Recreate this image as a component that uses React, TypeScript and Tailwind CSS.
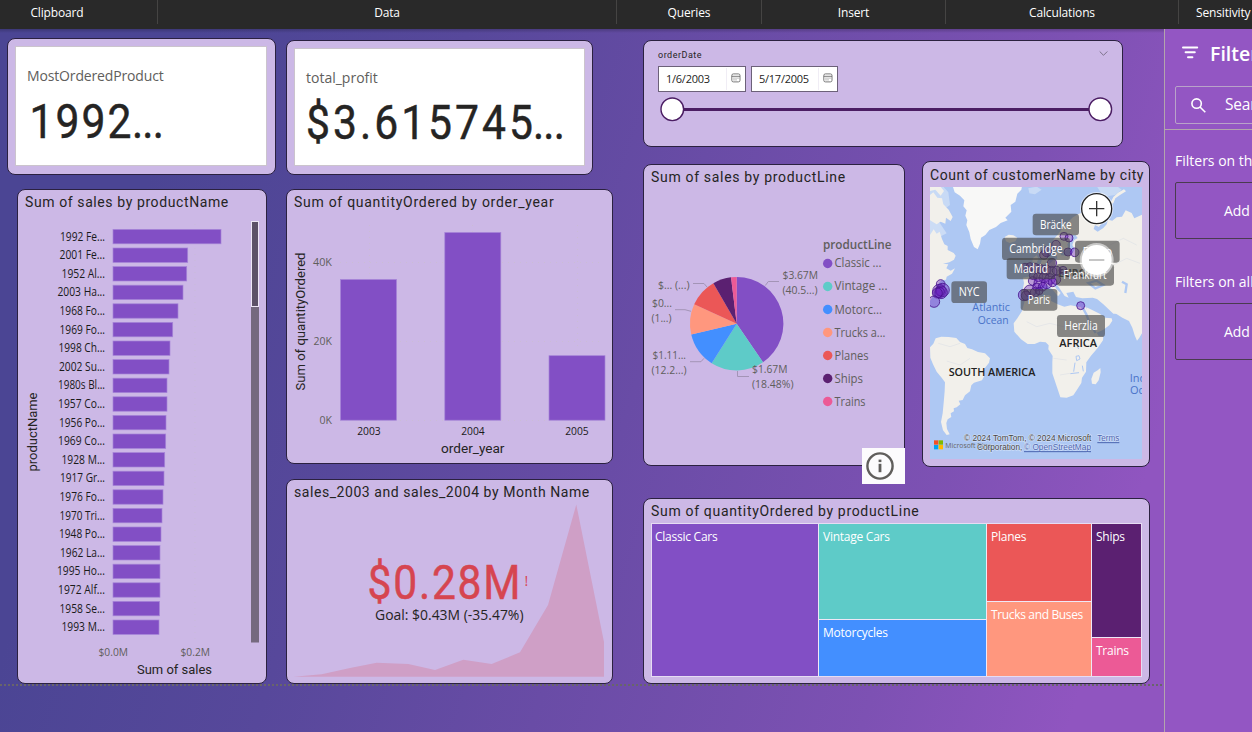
import React from "react";

const UI = "'Open Sans', 'Noto Sans', sans-serif";
const DIN = "Roboto, 'Noto Sans', sans-serif";

type LabelProps = {
  x: number;
  y: number;
  w?: number;
  size?: number;
  fill?: string;
  anchor?: "start" | "middle" | "end";
  font?: string;
  weight?: number;
  transform?: string;
  children: string;
};

function Label({ x, y, w, size = 11, fill = "#605e5c", anchor = "start", font = UI, weight = 400, transform, children }: LabelProps) {
  return (
    <text
      x={x}
      y={y}
      textLength={w}
      lengthAdjust="spacingAndGlyphs"
      fontSize={size}
      fill={fill}
      textAnchor={anchor}
      fontFamily={font}
      fontWeight={weight}
      transform={transform}
    >
      {children}
    </text>
  );
}

const NARROW = 0.87;

function BigNumber({ x, y, w, fill = "#252423", children }: { x: number; y: number; w: number; fill?: string; children: string }) {
  return (
    <text
      x={x / NARROW}
      y={y}
      textLength={w / NARROW}
      lengthAdjust="spacing"
      transform={`scale(${NARROW} 1)`}
      fontSize={49}
      fill={fill}
      stroke={fill}
      strokeWidth="0.5"
      fontFamily={DIN}
    >
      {children}
    </text>
  );
}

function Card({ className, children }: { className: string; children?: React.ReactNode }) {
  return (
    <section className={"shrink-0 overflow-hidden rounded-[8px] border border-[#2b2140] bg-[#ccb8e6] " + className}>{children}</section>
  );
}

function Title({ className, children }: { className: string; children: string }) {
  return (
    <h2 className={"whitespace-nowrap pl-[7px] font-[Roboto] text-[14px] leading-[20px] text-[#252423] " + className}>
      {children}
    </h2>
  );
}

function Ribbon() {
  const cell = "flex shrink-0 justify-center border-r border-[#454443]";
  return (
    <header className="h-[29px] shrink-0 bg-[#292929] text-[12px] leading-[25px] tracking-[-0.15px] text-white">
      <div className="flex h-[24px] w-[1400px]">
        <div className={cell + " w-[158px] pr-[43px]"}>Clipboard</div>
        <div className={cell + " w-[459px]"}>Data</div>
        <div className={cell + " w-[145px]"}>Queries</div>
        <div className={cell + " w-[184px]"}>Insert</div>
        <div className={cell + " w-[233px]"}>Calculations</div>
        <div className="pl-[17px]">Sensitivity</div>
      </div>
    </header>
  );
}

const products: [string, number, number][] = [
  ["1992 Fe...", 108, 45], ["2001 Fe...", 74.7, 45.5], ["1952 Al...", 73.7, 43.5], ["2003 Ha...", 70, 47.5],
  ["1968 Fo...", 65, 45.5], ["1969 Fo...", 59.7, 45.5], ["1998 Ch...", 57, 46.5], ["2002 Su...", 56, 46],
  ["1980s Bl...", 54, 47], ["1957 Co...", 54, 47], ["1956 Po...", 53, 46], ["1969 Co...", 52.7, 47],
  ["1928 M...", 51.7, 43.5], ["1917 Gr...", 51, 45], ["1976 Fo...", 50, 45.5], ["1970 Tri...", 49, 45.5],
  ["1948 Po...", 48, 46], ["1962 La...", 47, 45], ["1995 Ho...", 47, 48], ["1972 Alf...", 47, 47],
  ["1958 Se...", 46.5, 45.5], ["1993 M...", 46, 43.5],
];

function ProductSales() {
  return (
    <Card className="ml-[10px] mt-[14px] h-[495px] w-[250px]">
      <Title className="h-[25px] pt-[2px] tracking-[0.6px]">Sum of sales by productName</Title>
      <svg width="248" height="469" viewBox="18 215 248 469" className="block">
        <path d="M195 224V640" stroke="#c8bbd8" strokeDasharray="1 5" />
        {products.map(([name, value, w], i) => {
          const y = 229.4 + i * 18.6;
          return (
            <g key={name + i}>
              <Label x={105} y={y + 11.1} w={w} anchor="end" fill="#1a1a1a" size={11.8}>{name}</Label>
              <rect x={113} y={y} width={value} height={14.4} fill="#824fc5" stroke="#a584d8" strokeWidth="0.7" />
            </g>
          );
        })}
        <rect x="251" y="222" width="8" height="420.5" fill="#75697f" />
        <rect x="251.5" y="221.5" width="7" height="85" fill="#5d5168" stroke="#eee6f6" />
        <Label x={98.5} y={656} w={29.5}>$0.0M</Label>
        <Label x={180.5} y={656} w={29.5}>$0.2M</Label>
        <Label x={137} y={674} w={75} size={12.5} font={DIN} fill="#252423">Sum of sales</Label>
        <Label x={37} y={471.5} w={79} size={12.5} font={DIN} fill="#252423" transform="rotate(-90 37 471.5)">productName</Label>
      </svg>
    </Card>
  );
}

function YearQuantity() {
  return (
    <Card className="mt-[14px] h-[275px] w-[327px]">
      <Title className="h-[25px] pt-[2px] tracking-[0.72px]">Sum of quantityOrdered by order_year</Title>
      <svg width="325" height="248" viewBox="287 215 325 248" className="block">
        <path d="M340 262.5H604M340 341.5H604M340 420.5H604M369.5 225V420M472.5 225V420M577.5 225V420" stroke="#cbbcd6" strokeDasharray="1 5" />
        <g fill="#824fc5" stroke="#a584d8" strokeWidth="0.7">
          <rect x="340.5" y="279.5" width="56" height="140.7" />
          <rect x="444.8" y="232.5" width="56" height="187.7" />
          <rect x="549" y="355.7" width="56" height="64.5" />
        </g>
        <Label x={332} y={266.3} w={19} anchor="end">40K</Label>
        <Label x={332} y={345.3} w={18.5} anchor="end">20K</Label>
        <Label x={332} y={424.3} w={12.5} anchor="end">0K</Label>
        <Label x={369} y={435} w={23.5} anchor="middle" fill="#1a1a1a">2003</Label>
        <Label x={473} y={435} w={23.5} anchor="middle" fill="#1a1a1a">2004</Label>
        <Label x={577} y={435} w={23.5} anchor="middle" fill="#1a1a1a">2005</Label>
        <Label x={441} y={453} w={63.5} size={12.5} font={DIN} fill="#252423">order_year</Label>
        <Label x={305} y={390.5} w={138} size={12.5} font={DIN} fill="#252423" transform="rotate(-90 305 390.5)">Sum of quantityOrdered</Label>
      </svg>
    </Card>
  );
}

function Kpi() {
  return (
    <Card className="mt-[15px] h-[205px] w-[327px]">
      <Title className="h-[25px] pt-[2px] tracking-[0.56px]">sales_2003 and sales_2004 by Month Name</Title>
      <svg width="325" height="178" viewBox="287 505 325 178" className="block overflow-visible">
        <path
          d="M293.5 676.7 321.7 674.3 350 668 376.7 662.7 408.3 664 435 670 463.3 659.7 491.7 664 520 652.3 548 605 576.3 504.5 604 642V676.7Z"
          fill="#cf9fc6"
        />
        <BigNumber x={367.5} y={599} w={153} fill="#d64550">$0.28M</BigNumber>
        <Label x={524.5} y={585.5} size={14} fill="#d64550">!</Label>
        <Label x={375} y={620} w={148.5} size={14} fill="#252423">Goal: $0.43M (-35.47%)</Label>
      </svg>
    </Card>
  );
}

function CalendarIcon() {
  return (
    <svg width="10" height="10" viewBox="0 0 10 10" className="mr-[4px] mt-[-3px]" fill="none" stroke="#6b6b6b" strokeWidth="0.9">
      <rect x="0.8" y="0.9" width="8.2" height="8" rx="1.6" />
      <path d="M0.8 3.3H9" />
      <path d="M2.5 5.1H7.5M2.5 6.9H6" strokeDasharray="1 1" />
    </svg>
  );
}

function DateBox({ value, className }: { value: string; className: string }) {
  return (
    <div className={"flex h-[26px] items-center border border-[#6c6179] bg-white text-[11px] text-[#252423] " + className}>
      <span className="flex-1 pl-[7px] tracking-[-0.25px]">{value}</span>
      <span className="mr-[4px] h-[22px] border-l border-[#f0edf5]" />
      <CalendarIcon />
    </div>
  );
}

function DateSlicer() {
  return (
    <Card className="h-[107px] w-[480px]">
      <div className="flex h-[25px] justify-between pl-[14px] pr-[14px] pt-[8px]">
        <span className="font-[Roboto] text-[9px] leading-[12px] tracking-[0.5px] text-[#252423]">orderDate</span>
        <svg width="9" height="9" viewBox="0 0 9 9" fill="none" stroke="#7b7189"><path d="M0.7 2.5 4.5 6.3 8.3 2.5" /></svg>
      </div>
      <div className="flex gap-[5px] pl-[14px]">
        <DateBox value="1/6/2003" className="w-[88px]" />
        <DateBox value="5/17/2005" className="w-[87px]" />
      </div>
      <svg width="478" height="32" viewBox="644 92 478 32" className="block">
        <path d="M672 109.5H1100" stroke="#4b1d63" strokeWidth="3" />
        <circle cx="672.3" cy="109.3" r="11.3" fill="#fff" stroke="#4b1d63" strokeWidth="1.4" />
        <circle cx="1100.3" cy="109.3" r="11.3" fill="#fff" stroke="#4b1d63" strokeWidth="1.4" />
      </svg>
    </Card>
  );
}

const slices: [string, number, string, number][] = [
  ["Classic ...", 0.4047, "#824fc5", 47], ["Vintage ...", 0.59, "#5ecbc8", 53], ["Motorc...", 0.713, "#438fff", 47.5],
  ["Trucks a...", 0.818, "#ff977e", 51], ["Planes", 0.9167, "#eb5757", 34], ["Ships", 0.9806, "#5b2071", 28.5],
  ["Trains", 1, "#ec5a96", 31],
];

function PieCard() {
  const cx = 736.7, cy = 323.7, r = 46.7;
  const pt = (f: number) => `${cx + r * Math.sin(2 * Math.PI * f)} ${cy - r * Math.cos(2 * Math.PI * f)}`;
  return (
    <Card className="mt-[3px] h-[302px] w-[262px]">
      <Title className="h-[25px] pt-[2px] tracking-[0.68px]">Sum of sales by productLine</Title>
      <svg width="260" height="275" viewBox="644 190 260 275" className="block">
        {slices.map(([name, end, color, w], i) => {
          const start = i ? slices[i - 1][1] : 0;
          return (
            <g key={name}>
              <path d={`M${cx} ${cy}L${pt(start)}A${r} ${r} 0 0 1 ${pt(end)}Z`} fill={color} />
              <circle cx="827.7" cy={263.5 + i * 23} r="4.7" fill={color} />
              <Label x={834.5} y={267.3 + i * 23.1} w={w} size={12}>{name}</Label>
            </g>
          );
        })}
        <g fill="none" stroke="#a394b6">
          <path d="M765.3 285.5 768.3 281.5H779" /><path d="M693 283.5H704L707 287" /><path d="M675 309.7H685L691 311.3" />
          <path d="M690 361.7H701L704 358.3" /><path d="M737.5 371V376.5H749" />
        </g>
        <Label x={823} y={249} w={68.5} size={12} weight={600}>productLine</Label>
        <Label x={782.5} y={279.3} w={35.5}>$3.67M</Label>
        <Label x={782.5} y={294} w={35}>(40.5...)</Label>
        <Label x={658} y={288.5} w={31.5}>$... (...)</Label>
        <Label x={652} y={307.3} w={20}>$0...</Label>
        <Label x={651.5} y={322} w={20}>(1...)</Label>
        <Label x={652.5} y={359.3} w={33.5}>$1.11...</Label>
        <Label x={651.5} y={374} w={35}>(12.2...)</Label>
        <Label x={752} y={373} w={35.5}>$1.67M</Label>
        <Label x={752} y={388} w={41.5}>(18.48%)</Label>
      </svg>
    </Card>
  );
}

const bubbles: [number, number, number][] = [
  [462, 244, 12], [477, 249, 12], [438, 269, 13], [474, 291, 12], [494, 292, 13], [410, 290, 15], [426, 324, 14], [402, 300, 13],
  [459, 346, 12], [345, 338, 13], [360, 335, 12], [375, 338, 13], [390, 342, 14], [408, 345, 15], [425, 350, 16], [440, 347, 13],
  [370, 362, 12], [385, 366, 14], [402, 368, 15], [420, 372, 16], [438, 374, 14], [368, 378, 13], [388, 384, 16], [410, 385, 16],
  [428, 382, 13], [380, 396, 12], [398, 395, 13], [360, 408, 18], [375, 412, 14], [388, 408, 11], [342, 420, 17], [348, 422, 14],
  [512, 452, 12], [92, 387, 13], [88, 408, 20], [98, 405, 20], [93, 412, 19], [90, 410, 13], [82, 414, 15], [72, 440, 17],
];

function MapTag({ x, y, w, h, tx, tw, children }: { x: number; y: number; w: number; h: number; tx: number; tw: number; children: string }) {
  return (
    <g>
      <rect x={x} y={y} width={w} height={h} rx="10" fill="#444444" fillOpacity="0.62" />
      <Label x={tx} y={y + 45} w={tw} size={36} fill="#fff">{children}</Label>
    </g>
  );
}

function MapCard() {
  return (
    <Card className="h-[306px] w-[228px]">
      <Title className="h-[25px] pt-[3px] tracking-[0.6px]">Count of customerName by city</Title>
      <div className="pl-[7px]">
        <svg width="212" height="272" viewBox="60 96 636 816" className="block">
          <rect x="60" y="93" width="636" height="819" fill="#aec8f3" />
          <g fill="#dfe9f6">
            <path d="M60 93H98L115 112 120 150 102 163 82 140 60 128ZM355 100 380 95 395 104 375 118 358 115ZM560 93 620 93 635 104 615 120 580 125Z" opacity=".55" />
            <path d="M60 195 90 205 110 235 90 245 60 240Z" opacity=".6" />
          </g>
          <g fill="#f2f0eb">
            <path d="M60 120 70 112 82 128 96 130 100 148 116 164 128 186 122 198 108 188 106 206 92 200 80 208 60 196Z" />
            <path d="M60 93H90L102 108 92 122 76 104 60 108Z" />
            <path fill="#f8f8f7" d="M128 93 134 112 150 122 163 136 160 154 170 166 166 182 172 196 169 210 178 232 182 252 192 276 203 283 210 266 213 248 226 240 238 225 258 216 272 204 293 196 286 188 304 170 302 150 316 140 322 116 334 104 336 93Z" />
            <path d="M60 240 71 223 80 236 89 230 96 252 103 268 113 273 113 285 131 294 137 302 132 314 118 322 99 326 115 328 109 340 122 347 135 340 126 356 110 365 108 374 94 376 83 389 77 404 69 424 60 437Z" />
            <path d="M284 246 296 239 310 241 322 248 316 259 299 264 288 259Z" />
            <path d="M386 286 398 278 402 294 413 308 418 322 404 329 391 326 397 312 387 303ZM369 309 380 301 386 312 379 324 367 321Z" />
            <path d="M505 177 521 172 542 182 559 196 574 205 567 216 555 210 551 222 563 230 580 219 590 208 594 194 607 197 620 187 636 185 647 166 665 174 673 190 696 179V480L690 476H610L580 448 561 432 548 428 517 430 498 426 490 410 469 414 476 428 464 423 452 405 441 389 428 384 440 403 452 414 444 424 427 403 411 391 387 389 378 404 365 420 344 423 337 411 342 384 339 368 367 363 376 353 359 337 371 330 389 332 405 335 419 326 431 315 442 311 439 291 449 286 453 301 468 302 486 297 494 283 487 270 492 256 503 249 496 239 486 241 482 255 472 268 475 280 463 291 456 275 448 274 438 281 429 274 430 254 443 239 458 218 474 201 489 187Z" />
            <path d="M598 150 610 126 624 113 642 103 648 109 630 120 616 130 610 145Z" />
            <path d="M345 434 362 432 385 425 415 420 423 424 423 438 443 448 463 455 482 451 505 455 526 456 535 469 541 492 552 520 566 543 580 544 579 556 563 579 543 602 529 622 528 650 516 668 514 684 500 706 490 721 470 728 451 727 441 697 427 655 427 622 428 603 415 583 416 571 407 562 390 560 374 567 353 567 333 553 313 530 311 505 322 490 336 468Z" />
            <path d="M529 457 545 464 569 476 585 488 605 490 607 497 598 511 580 524 557 535 545 512 535 488ZM610 471 696 468V535L688 548 681 557 674 541 667 518 657 498 637 488Z" />
            <path d="M571 639 572 652 566 676 557 688 546 686 544 672 551 653 563 646Z" />
            <path d="M60 577 70 566 77 550 94 545 116 546 139 549 150 561 165 567 172 579 186 583 204 591 225 595 240 610 237 623 223 641 223 662 216 676 192 683 184 691 180 709 165 721 158 735 146 737 151 748 140 757 131 760 132 769 122 775 124 786 113 793 109 804 111 822 119 838 110 840 99 826 93 801 98 775 101 743 104 708 105 682 95 668 80 650 69 628 61 608Z" />
          </g>
          <g fill="none" stroke="#aec8f3" strokeWidth="3">
            <path d="M498 604 507 602 510 612 500 617ZM495 623 491 650M517 632 520 649M481 656 507 653M506 582 500 570" />
            <path d="M516 454 529 478 540 507 557 534" strokeWidth="7" />
            <path d="M580 472 592 485M636 380 650 388 646 414M535 384 560 377 580 390 556 400Z" strokeWidth="7" />
          </g>
          <g fill="none" stroke="#d9dce4" strokeWidth="1.5">
            <path d="M85 565 120 575 150 565M110 618 150 630 180 610M350 500 380 515 420 505 480 520M430 610 470 615M450 660 480 655M600 270 640 250 680 270M610 330 650 310 690 325M560 260 590 300" />
          </g>
          <Label x={445} y={366} w={85} size={32} weight={700} fill="#3a3a3a">EURO</Label>
          <g fill="#6a1fbb" fillOpacity=".4" stroke="#45128a" strokeWidth="2.4">
            {bubbles.map(([x, y, r], i) => <circle key={i} cx={x} cy={y} r={r} />)}
          </g>
          <Label x={187} y={468} w={113} size={33} fill="#4a73c9">Atlantic</Label>
          <Label x={203} y={507} w={93} size={33} fill="#4a73c9">Ocean</Label>
          <Label x={659} y={682} size={33} fill="#4a73c9">Indian</Label>
          <Label x={660} y={717} size={33} fill="#4a73c9">Ocean</Label>
          <Label x={116} y={663} w={260} size={32} weight={600} fill="#222">SOUTH AMERICA</Label>
          <Label x={448} y={576} w={113} size={32} weight={600} fill="#222">AFRICA</Label>
          <MapTag x={368} y={176} w={139} h={65} tx={390} tw={95}>Bräcke</MapTag>
          <MapTag x={495} y={257} w={134} h={66} tx={518} tw={88}>Espoo</MapTag>
          <MapTag x={276} y={248} w={204} h={67} tx={298} tw={160}>Cambridge</MapTag>
          <MapTag x={438} y={327} w={174} h={65} tx={460} tw={130}>Frankfurt</MapTag>
          <MapTag x={290} y={309} w={147} h={64} tx={311} tw={103}>Madrid</MapTag>
          <MapTag x={124} y={379} w={107} h={65} tx={146} tw={63}>NYC</MapTag>
          <MapTag x={332} y={402} w={110} h={65} tx={353} tw={67}>Paris</MapTag>
          <MapTag x={441} y={480} w={144} h={66} tx={463} tw={100}>Herzlia</MapTag>
          <circle cx="560" cy="161" r="50" fill="#fff" opacity=".55" />
          <circle cx="560" cy="161" r="45" fill="#fff" stroke="#222" strokeWidth="4" />
          <path d="M537 161H583M560 138V184" stroke="#333" strokeWidth="4" />
          <circle cx="560" cy="315" r="51" fill="#fff" opacity=".55" />
          <circle cx="560" cy="315" r="45" fill="#fff" />
          <path d="M537 315H583" stroke="#aaa" strokeWidth="4" />
          <path d="M72 856h13v13h-13z" fill="#f25022" /><path d="M86 856h13v13h-13z" fill="#7fba00" />
          <path d="M72 870h13v13h-13z" fill="#00a4ef" /><path d="M86 870h13v13h-13z" fill="#ffb900" />
          <Label x={106} y={878} w={138} size={22} fill="#666">Microsoft Bing</Label>
          <g fontFamily="'Liberation Sans', sans-serif" fontSize="25" fill="#444" stroke="#dbe6fa" strokeWidth="3" paintOrder="stroke">
            <text x="162" y="858" textLength="382" lengthAdjust="spacingAndGlyphs">© 2024 TomTom, © 2024 Microsoft</text>
            <text x="201" y="885" textLength="136" lengthAdjust="spacingAndGlyphs">Corporation,</text>
            <text x="562" y="858" textLength="66" lengthAdjust="spacingAndGlyphs" fill="#4a64b0">Terms</text>
            <text x="342" y="885" textLength="201" lengthAdjust="spacingAndGlyphs" fill="#4a64b0">© OpenStreetMap</text>
          </g>
          <path d="M562 863H628M342 890H543" stroke="#4a64b0" strokeWidth="3" />
        </svg>
      </div>
    </Card>
  );
}

function Treemap() {
  return (
    <Card className="mt-[31px] h-[186px] w-[507px]">
      <Title className="h-[24px] pt-[2px] tracking-[0.68px]">Sum of quantityOrdered by productLine</Title>
      <div className="ml-[7px] flex h-[154px] w-[491px] gap-px border border-[#e6dcf3] bg-[#efe8f7] text-[12px] leading-[25px] tracking-[-0.25px] text-white">
        <div className="w-[166px] bg-[#824fc5] pl-[3px]">Classic Cars</div>
        <div className="flex w-[167px] flex-col gap-px">
          <div className="h-[95px] bg-[#5ecbc8] pl-[4px]">Vintage Cars</div>
          <div className="flex-1 bg-[#438fff] pl-[4px]">Motorcycles</div>
        </div>
        <div className="flex w-[104px] flex-col gap-px">
          <div className="h-[77px] bg-[#eb5757] pl-[4px]">Planes</div>
          <div className="flex-1 whitespace-nowrap bg-[#ff977e] pl-[4px] tracking-[-0.35px]">Trucks and Buses</div>
        </div>
        <div className="flex flex-1 flex-col gap-px">
          <div className="h-[113px] bg-[#5b2071] pl-[4px]">Ships</div>
          <div className="flex-1 bg-[#ec5a96] pl-[4px]">Trains</div>
        </div>
      </div>
    </Card>
  );
}

function FilterPane() {
  const field = "ml-[10px] flex h-[57px] w-[260px] items-center rounded-[2px] border border-[#4a3b4f] pl-[48px] text-[14px] tracking-[-0.1px]";
  return (
    <aside className="w-[88px] shrink-0 overflow-hidden whitespace-nowrap border-l border-[#b3a5ac] bg-[#9356c3] text-white">
      <div className="flex h-[57px] items-start pl-[17px] pt-[17px]">
        <svg width="17" height="14" viewBox="0 0 17 14" className="shrink-0" stroke="#fff" strokeWidth="2" strokeLinecap="round"><path d="M1 1.4H15.2M3.6 6.2H12.8M6 11.2H10.4" /></svg>
        <span className="ml-[11px] mt-[-6px] shrink-0 text-[19.5px] font-semibold leading-[28px]">Filters</span>
      </div>
      <div className="ml-[10px] flex h-[38px] w-[260px] items-center rounded-[2px] border border-[#b9a3c9] pl-[15px]">
        <svg width="15" height="15" viewBox="0 0 15 15" fill="none" stroke="#fff" strokeWidth="1.6"><circle cx="5.6" cy="5.6" r="4.7" /><path d="M9 9 14.3 14.3" /></svg>
        <span className="ml-[19px] text-[15.5px] tracking-[-0.2px]">Search</span>
      </div>
      <div className="mt-[5px] border-t border-[#b3a5ac]" />
      <p className="mt-[20px] pl-[10px] text-[14px] leading-[22px]">Filters on this page</p>
      <div className={field + " mt-[10px]"}>Add data fields here</div>
      <p className="mt-[32px] pl-[10px] text-[14px] leading-[22px]">Filters on all pages</p>
      <div className={field + " mt-[10px]"}>Add data fields here</div>
    </aside>
  );
}

export default function App() {
  return (
    <div className="flex h-[732px] w-[1252px] flex-col overflow-hidden font-['Open_Sans',sans-serif]">
      <Ribbon />
      <div className="flex min-h-0 flex-1">
        <main className="w-[1164px] bg-[linear-gradient(107deg,#4b4594_14%,#57489b_34%,#694ca6_54%,#7d51b3_78%,#9055c0_93%)]">
          <div className="h-[4px] bg-gradient-to-b from-black/20 to-transparent" />
          <div className="flex h-[651px] overflow-hidden">
            <div className="w-[279px] shrink-0 pl-[7px] pt-[5px]">
              <Card className="h-[137px] w-[269px]">
                <div className="ml-[7px] mt-[7px] h-[120px] w-[252px] border border-[#cbc4cd] bg-white pl-[11px] pt-[19px]">
                  <div className="text-[14px] leading-[20px] tracking-[-0.15px] text-[#605e5c]">MostOrderedProduct</div>
                  <svg width="200" height="56" viewBox="27 94 200 56" className="mt-[9px] block overflow-visible">
                    <BigNumber x={29.5} y={137} w={102}>1992</BigNumber>
                    <BigNumber x={132} y={137} w={32}>...</BigNumber>
                  </svg>
                </div>
              </Card>
              <ProductSales />
            </div>
            <div className="w-[364px] shrink-0 pl-[7px] pt-[7px]">
              <Card className="h-[135px] w-[307px]">
                <div className="ml-[7px] mt-[7px] h-[118px] w-[291px] border border-[#cbc4cd] bg-white pl-[11px] pt-[19px]">
                  <div className="text-[14px] leading-[20px] text-[#605e5c]">total_profit</div>
                  <svg width="270" height="56" viewBox="306 97 270 56" className="mt-[9px] block overflow-visible">
                    <BigNumber x={306} y={139.5} w={227}>$3.615745</BigNumber>
                    <BigNumber x={533} y={139.5} w={32}>...</BigNumber>
                  </svg>
                </div>
              </Card>
              <YearQuantity />
              <Kpi />
            </div>
            <div className="shrink-0 pt-[7px]">
              <DateSlicer />
              <div className="relative mt-[14px] flex gap-[17px]">
                <PieCard />
                <MapCard />
                <div className="absolute left-[219px] top-[287px] flex h-[36px] w-[43px] items-center bg-[#fcfbfd] pl-[4px]">
                  <svg width="28" height="28" viewBox="0 0 28 28" fill="none" stroke="#605e5c">
                    <circle cx="14" cy="14" r="12.6" strokeWidth="2.4" />
                    <path d="M14 11.8V20.2" strokeWidth="2.8" /><path d="M14 7.6V10.1" strokeWidth="2.8" />
                  </svg>
                </div>
              </div>
              <Treemap />
            </div>
          </div>
          <div className="h-[2px] bg-[repeating-linear-gradient(90deg,#69656a_0_2px,transparent_2px_4px)]" />
        </main>
        <FilterPane />
      </div>
    </div>
  );
}
